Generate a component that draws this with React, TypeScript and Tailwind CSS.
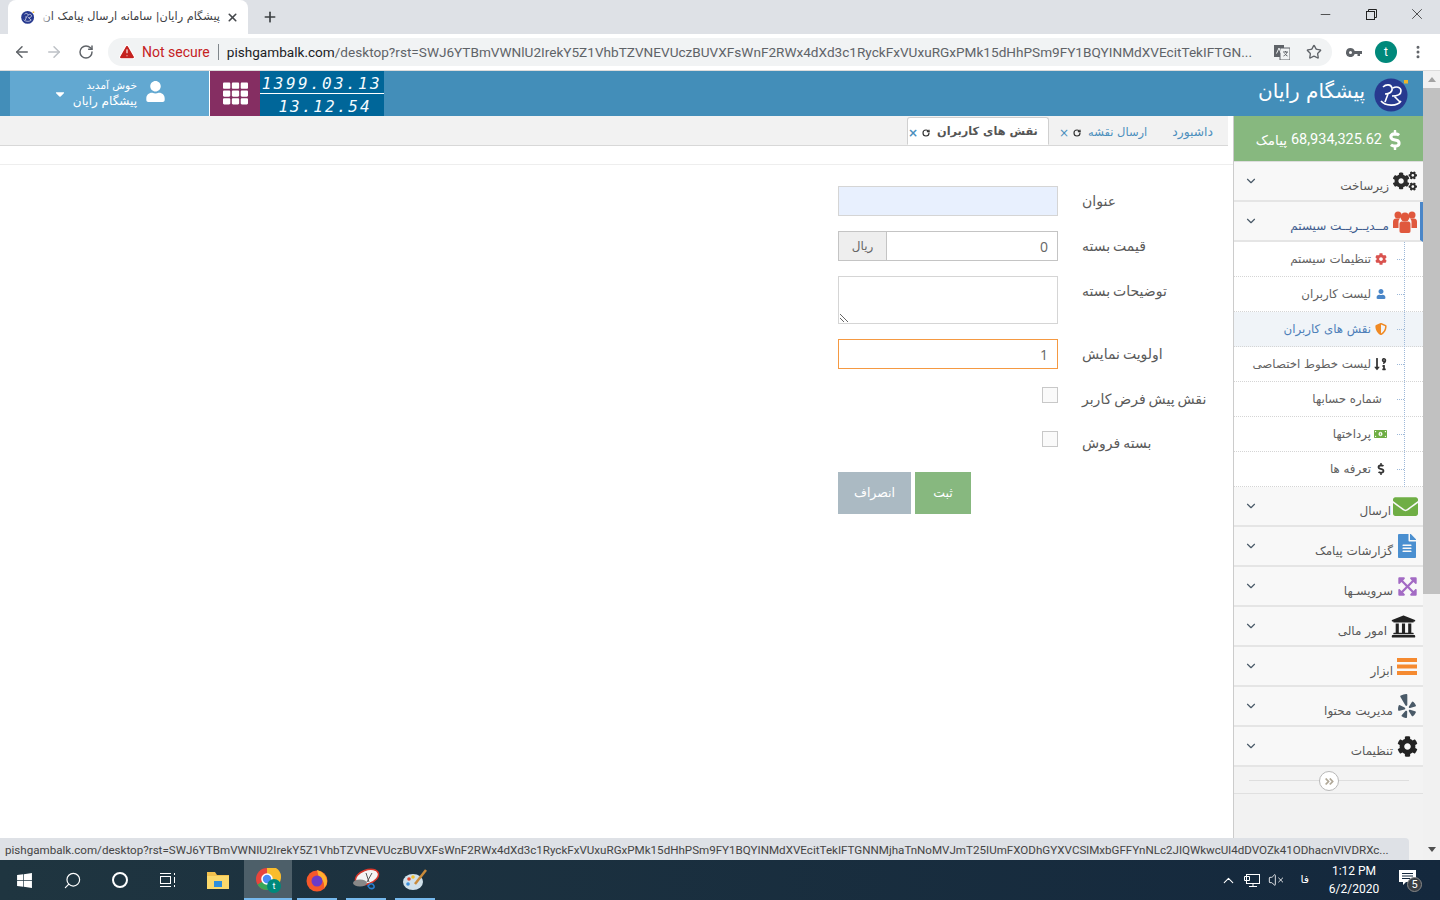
import React from "react";
import {
  FaAngleDoubleRight, FaCaretDown, FaCog, FaCogs, FaDollarSign, FaEnvelope, FaExpandArrowsAlt,
  FaFileAlt, FaMoneyBillAlt, FaShieldAlt, FaSortNumericDownAlt, FaTh, FaUniversity, FaUser, FaWindows, FaYelp,
} from "react-icons/fa";
import { ArrowLeft, ArrowRight, ChevronDown, ChevronUp, Minus, MoreVertical, Plus, RotateCw, Search, Star, TriangleAlert, VolumeX, X } from "lucide-react";

const fa = { fontFamily: '"DejaVu Sans", "Noto Sans", sans-serif' };
const la = { fontFamily: 'Roboto, "Noto Sans", sans-serif' };
const num = { fontFamily: '"Open Sans", "Noto Sans", sans-serif' };
const URL_REST = "/desktop?rst=SWJ6YTBmVWNlU2IrekY5Z1VhbTZVNEVUczBUVXFsWnF2RWx4dXd3c1RyckFxVUxuRGxPMk15dHhPSm9FY1BQYINMdXVEcitTekIFTGN...";
const STATUS = "pishgambalk.com/desktop?rst=SWJ6YTBmVWNIU2IrekY5Z1VhbTZVNEVUczBUVXFsWnF2RWx4dXd3c1RyckFxVUxuRGxPMk15dHhPSm9FY1BQYINMdXVEcitTekIFTGNNMjhaTnNoMVJmT25IUmFXODhGYXVCSlMxbGFFYnNLc2JIQWkwcUl4dDVOZk41ODhacnVIVDRXc...";

function Logo({ size }: { size: number }) {
  return (
    <svg width={size} height={size} viewBox="0 0 36 36" className="shrink-0">
      <circle cx="17" cy="19" r="16.5" fill="#27398f" />
      <path d="M9 11c3-3 8-3 9 1s-3 6-7 6M18 20c4 0 9-1 9-5s-5-5-8-3M14 18l-3 8M20 20l6 6M7 25c4 5 16 6 20 0" stroke="#fff" strokeWidth="1.6" fill="none" />
      <rect x="30" y="4" width="4" height="3.5" fill="#f0b428" />
    </svg>
  );
}

function ChromeBar() {
  return (
    <>
      <div className="h-[34px] shrink-0 bg-[#dee1e6] flex items-end pl-[8px]">
        <div className="w-[240px] h-[34px] bg-white rounded-t-[8px] flex items-center pl-[13px] pr-[9px]">
          <Logo size={14} />
          <div className="relative flex-1 min-w-0 ml-[4px] mr-[6px] h-[20px] flex items-center" dir="rtl" style={fa}>
            <span className="whitespace-nowrap text-[11.3px] text-[#3c4043]">پیشگام رایان| سامانه ارسال پیامک ان</span>
            <span className="absolute left-0 top-0 h-full w-[14px] bg-gradient-to-r from-white to-transparent" />
          </div>
          <X size={13} strokeWidth={3} className="text-[#45484c] shrink-0" />
        </div>
        <div className="w-[44px] h-[34px] flex items-center justify-center"><Plus size={16} strokeWidth={2.5} className="text-[#3c4043]" /></div>
        <div className="flex-1" />
        <div className="h-[34px] flex text-[#222] pb-[6px] items-center">
          <div className="w-[46px] flex justify-center"><Minus size={15} strokeWidth={1.2} /></div>
          <div className="w-[46px] flex justify-center">
            <svg width="11" height="11" viewBox="0 0 11 11" fill="none" stroke="#222"><rect x="0.5" y="2.5" width="8" height="8" /><path d="M2.5 2.5v-2h8v8h-2" /></svg>
          </div>
          <div className="w-[46px] flex justify-center"><X size={18} strokeWidth={1} /></div>
        </div>
      </div>
      <div className="h-[37px] shrink-0 bg-white border-b border-[#dcdcdc] flex items-center" style={la}>
        <ArrowLeft size={18} strokeWidth={2} className="ml-[13px] text-[#5f6368]" />
        <ArrowRight size={18} strokeWidth={2} className="ml-[14px] text-[#bdc1c6]" />
        <RotateCw size={16} strokeWidth={2.2} className="ml-[15px] text-[#5f6368]" />
        <div className="ml-[14px] w-[1224px] h-[28px] rounded-[14px] bg-[#f1f3f4] flex items-center pl-[10px] pr-[8px]">
          <TriangleAlert size={18} fill="#c5221f" stroke="#fff" strokeWidth={1.5} />
          <span className="ml-[6px] text-[14px] text-[#c5221f] whitespace-nowrap">Not secure</span>
          <span className="mx-[8px] h-[16px] w-px bg-[#80868b]" />
          <span className="text-[13.6px] text-[#202124] whitespace-nowrap">pishgambalk.com</span>
          <span className="text-[13.6px] text-[#5f6368] whitespace-nowrap">{URL_REST}</span>
          <div className="flex-1" />
          <svg width="16" height="15" viewBox="0 0 16 15" className="mr-[16px] shrink-0">
            <rect x="0" y="0" width="10" height="12" fill="#5f6368" />
            <rect x="6" y="3" width="10" height="12" fill="#f1f3f4" stroke="#5f6368" />
            <path d="M2.5 8.5L5 3l2 5" stroke="#f1f3f4" fill="none" />
            <path d="M9 7h5M11.5 6v1M13 7c-.5 2-2 3.5-3.5 4M10.5 8.5c.7 1 1.8 2 3 2.5" stroke="#5f6368" fill="none" />
          </svg>
          <Star size={16} strokeWidth={2} className="text-[#5f6368] mr-[2px]" />
        </div>
        <svg width="16" height="9" viewBox="0 0 16 9" className="ml-[14px]" fill="#5f6368">
          <path d="M4.5 0a4.5 4.5 0 0 1 4.2 3H16v3h-2v2h-2.5V6H8.7a4.5 4.5 0 1 1-4.2-6zm0 3a1.5 1.5 0 1 0 0 3 1.5 1.5 0 0 0 0-3z" fillRule="evenodd" />
        </svg>
        <div className="ml-[13px] w-[22px] h-[22px] rounded-full bg-[#00897b] text-white text-[12px] flex items-center justify-center">t</div>
        <MoreVertical size={16} strokeWidth={2.5} className="ml-[13px] text-[#5f6368]" />
      </div>
    </>
  );
}

function AppHeader() {
  return (
    <div className="h-[45px] shrink-0 bg-[#438eb9] flex text-white">
      <div className="w-[10px]" />
      <div className="w-[199px] bg-[#62a8d1] flex items-center pl-[43px]">
        <FaCaretDown size={14} />
        <div className="ml-[6px] w-[64px] text-right whitespace-nowrap" dir="rtl" style={fa}>
          <div className="text-[10.5px] leading-[15px]">خوش آمدید</div>
          <div className="text-[12px] leading-[16px]">پیشگام رایان</div>
        </div>
        <FaUser size={21} className="ml-[8px] mb-[4px]" />
      </div>
      <div className="w-px bg-white" />
      <div className="w-[50px] bg-[#852e62] flex items-center justify-center"><FaTh size={25} /></div>
      <div className="w-[124px] bg-[#006699] flex flex-col items-center italic text-[#f4fbff]" style={{ fontFamily: '"DejaVu Sans Mono", monospace' }}>
        <div className="h-[22.5px] leading-[26px] text-[16px] w-full text-center tracking-[2.4px] border-b border-white whitespace-nowrap">1399.03.13</div>
        <div className="flex-1 leading-[25px] pl-[6px] text-[16px] tracking-[2px] whitespace-nowrap">13.12.54</div>
      </div>
      <div className="flex-1" />
      <div className="flex items-center pr-[13px]" dir="rtl">
        <Logo size={36} />
        <span className="mr-[9px] mb-[5px] text-[20px] whitespace-nowrap" style={fa}>پیشگام رایان</span>
      </div>
    </div>
  );
}

function Users() {
  return (
    <svg width="24" height="24" viewBox="0 0 24 24" fill="#e0583d">
      <circle cx="5" cy="6" r="3.5" /><circle cx="19" cy="6" r="3.5" /><circle cx="12" cy="8" r="4.5" />
      <path d="M0 19v-6c0-2 1-3.5 3-3.5h4c-1 1-1.5 2-1.5 3.5v6zM24 19v-6c0-2-1-3.5-3-3.5h-4c1 1 1.5 2 1.5 3.5v6z" />
      <path d="M6.5 22v-7c0-2 1.5-2.5 3-2.5h5c1.5 0 3 .5 3 2.5v7c0 1-.5 2-2 2h-7c-1.5 0-2-1-2-2z" />
    </svg>
  );
}

function MenuItem({ icon, label, active, textClass }: { icon: React.ReactNode; label: string; active?: boolean; textClass: string }) {
  return (
    <div dir="rtl" className={`h-[40px] bg-[#f8f8f8] border-b-2 border-[#e5e5e5] flex items-center pr-[5px] pl-[10px] ${active ? "border-r-[3px] border-r-[#4a86c8] !pr-[2px]" : ""}`}>
      <span className="w-[26px] h-[28px] flex items-center justify-center shrink-0">{icon}</span>
      <span className={`mt-[9px] text-[12px] whitespace-nowrap ${textClass} ${active ? "text-[#3f5d8f]" : "text-[#585858]"}`} style={fa}>{label}</span>
      <ChevronDown size={14} strokeWidth={2} className="mr-auto mb-[1px] text-[#4a5a68]" />
    </div>
  );
}

function SubItem({ icon, label, active }: { icon?: React.ReactNode; label: string; active?: boolean }) {
  return (
    <div dir="rtl" className={`relative h-[35px] border-b border-dotted border-[#d5d5d5] flex items-center pr-[36px] ${active ? "bg-[#f0f4f8]" : "bg-white"}`}>
      <span className="absolute right-[19px] top-[17px] w-[7px] border-t border-dotted border-[#9db8d8]" />
      {icon ? <span className="w-[13px] flex justify-center shrink-0">{icon}</span> : <span className="w-[2px] shrink-0" />}
      <span className={`mr-[3px] mt-[2px] text-[11.8px] whitespace-nowrap ${active ? "text-[#4e7fb8]" : "text-[#616161]"}`} style={fa}>{label}</span>
    </div>
  );
}

function Sidebar() {
  return (
    <aside className="w-[190px] shrink-0 border-l border-[#cccccc] bg-[#f2f2f2] flex flex-col">
      <div dir="rtl" className="h-[46px] bg-[#87b87f] border-b border-[#dddddd] text-white flex items-center pr-[18px] pt-[3px]">
        <FaDollarSign size={20} />
        <span className="mr-[3px] text-[14.5px] whitespace-nowrap" style={la}>68,934,325.62</span>
        <span className="mr-[4px] text-[13.5px] whitespace-nowrap" style={fa}>پیامک</span>
      </div>
      <MenuItem textClass="mr-[3px]" icon={<FaCogs size={24} className="text-[#2b2b2b]" />} label="زیرساخت" />
      <MenuItem textClass="mr-[3px]" active icon={<Users />} label="مــدیــریــت سیستم" />
      <div className="relative">
        <span className="absolute right-[18px] top-0 bottom-0 border-r border-dotted border-[#9db8d8] z-10" />
        <SubItem icon={<FaCog size={12} className="text-[#d9534f]" />} label="تنظیمات سیستم" />
        <SubItem icon={<FaUser size={10} className="text-[#4a86c8]" />} label="لیست کاربران" />
        <SubItem active icon={<FaShieldAlt size={12} className="text-[#f08a24]" />} label="نقش های کاربران" />
        <SubItem icon={<FaSortNumericDownAlt size={14} className="text-[#333]" />} label="لیست خطوط اختصاصی" />
        <SubItem label="شماره حسابها" />
        <SubItem icon={<FaMoneyBillAlt size={14} className="text-[#6fae45]" />} label="پرداختها" />
        <SubItem icon={<FaDollarSign size={12} className="text-[#333]" />} label="تعرفه ها" />
      </div>
      <MenuItem textClass="mr-[1px]" icon={<FaEnvelope size={25} className="text-[#6fae45]" />} label="ارسال" />
      <MenuItem textClass="-mr-[1px]" icon={<FaFileAlt size={24} className="text-[#4a8fd0] translate-x-[2px]" />} label="گزارشات پیامک" />
      <MenuItem textClass="-mr-[1px]" icon={<FaExpandArrowsAlt size={21} className="text-[#a36bc4] translate-x-[2px]" />} label="سرویسـها" />
      <MenuItem textClass="mr-[5px]" icon={<FaUniversity size={25} className="text-[#222] -translate-x-[2px]" />} label="امور مالی" />
      <MenuItem textClass="-mr-[1px]" icon={
        <svg width="20" height="17" viewBox="0 0 20 17" className="translate-x-[2px]" fill="#f58a30"><rect width="20" height="4" /><rect y="6.5" width="20" height="4" /><rect y="13" width="20" height="4" /></svg>
      } label="ابزار" />
      <MenuItem textClass="-mr-[1px]" icon={<FaYelp size={24} className="text-[#4a5a68] translate-x-[2px]" />} label="مدیریت محتوا" />
      <MenuItem textClass="-mr-[1px]" icon={<FaCog size={21} className="text-[#222] translate-x-[2px]" />} label="تنظیمات" />
      <div className="relative h-[27px] border-b border-[#e0e0e0] bg-[#f3f3f3] flex items-center justify-center">
        <div className="w-[160px] border-t border-[#dedede]" />
        <span className="absolute left-[85px] top-[4px] w-[20px] h-[20px] rounded-full border border-[#b8b8b8] bg-white flex items-center justify-center">
          <FaAngleDoubleRight size={11} className="text-[#b0a898]" />
        </span>
      </div>
    </aside>
  );
}

function Tabs() {
  return (
    <div dir="rtl" className="h-[30px] bg-[#f2f2f2] border-b border-[#d8d8d8] mr-[5px] shrink-0 flex items-end pr-[15px] -mb-px" style={fa}>
      <span className="h-[28px] pt-[3px] flex items-center text-[12.3px] text-[#4c8fbd] pl-[25px]">داشبورد</span>
      <span className="h-[28px] pt-[3px] flex items-center text-[11.5px] text-[#4c8fbd] whitespace-nowrap pl-[10px]">ارسال نقشه<RotateCw size={8} strokeWidth={3.5} className="mr-[7px] text-[#333]" /><span className="mr-[4px] text-[#4c8fbd] text-[12px]">×</span></span>
      <span className="h-[28px] pt-[3px] pr-[10px] w-[142px] bg-white border border-b-white border-[#d0d0d0] rounded-t-[3px] flex items-center justify-center text-[11.3px] font-bold text-[#555] whitespace-nowrap">نقش های کاربران<RotateCw size={8} strokeWidth={3.5} className="mr-[7px] text-[#333]" /><span className="mr-[4px] text-[#4c8fbd] text-[12px]">×</span></span>
    </div>
  );
}

function Label({ children, up }: { children: string; up?: boolean }) {
  return (
    <label className={`w-[147px] h-[30px] shrink-0 flex justify-end ${up ? "-mt-[3px]" : ""}`} style={fa}>
      <span className="pl-[24px] leading-[30px] text-[14px] [word-spacing:-1.5px] text-[#5a5a5a] whitespace-nowrap">{children}</span>
    </label>
  );
}

function Form() {
  return (
    <div dir="rtl" className="flex flex-col pr-[28px] pt-[21px]">
      <div className="flex mb-[15px]"><Label>عنوان</Label><div className="w-[220px] h-[30px] border border-[#d5d5d5] bg-[#e8f0fe]" /></div>
      <div className="flex mb-[15px]">
        <Label>قیمت بسته</Label>
        <div className="w-[220px] h-[30px] flex border border-[#c4c4c4]" style={num}>
          <div className="flex-1 bg-white flex items-center px-[9px] text-[14px] text-[#666]">0</div>
          <div className="w-[48px] bg-[#eeeeee] border-r border-[#c4c4c4] flex items-center justify-center text-[12px] text-[#666]" style={fa}>ریال</div>
        </div>
      </div>
      <div className="flex mb-[15px]">
        <Label>توضیحات بسته</Label>
        <div className="relative w-[220px] h-[48px] border border-[#d5d5d5] bg-white">
          <svg className="absolute left-[1px] bottom-[1px]" width="9" height="9" viewBox="0 0 9 9" stroke="#666" fill="none"><path d="M0 1l8 8M0 5l4 4" /></svg>
        </div>
      </div>
      <div className="flex mb-[18px]" style={num}><Label>اولویت نمایش</Label><div className="w-[220px] h-[30px] border border-[#f59942] bg-white text-[14px] text-[#666] flex items-center px-[9px]">1</div></div>
      <div className="flex h-[30px] mb-[14px]"><Label up>نقش پیش فرض کاربر</Label><span className="w-[16px] h-[16px] border border-[#c8c8c8] bg-[#fafafa] block" /></div>
      <div className="flex h-[30px] mb-[11px]"><Label up>بسته فروش</Label><span className="w-[16px] h-[16px] border border-[#c8c8c8] bg-[#fafafa] block" /></div>
      <div className="flex mr-[147px] w-[220px] gap-[4px]" style={fa} dir="ltr">
        <button className="w-[73px] h-[42px] bg-[#abbac3] text-white text-[12.5px]">انصراف</button>
        <button className="w-[56px] h-[42px] bg-[#87b87f] text-white text-[12.5px]">ثبت</button>
      </div>
    </div>
  );
}

function Taskbar() {
  const cell = "h-[40px] flex items-center justify-center relative";
  const under = "absolute bottom-0 h-[2px] bg-[#76b9ed]";
  return (
    <div className="h-[40px] shrink-0 bg-gradient-to-r from-[#1f3540] to-[#14283d] flex text-white" style={la}>
      <div className={`${cell} w-[48px]`}><FaWindows size={17} /></div>
      <div className={`${cell} w-[48px]`}><Search size={19} strokeWidth={1.5} className="-scale-x-100" /></div>
      <div className={`${cell} w-[48px]`}><span className="w-[16px] h-[16px] rounded-full border-2 border-white" /></div>
      <div className={`${cell} w-[48px]`}>
        <svg width="18" height="16" viewBox="0 0 18 16" fill="none" stroke="#fff"><rect x="1.5" y="4.5" width="10" height="7" /><path d="M1 1.5h11M1 14.5h11M15.5 1v2M15.5 5v6M15.5 13v2" /></svg>
      </div>
      <div className={`${cell} w-[52px]`}>
        <svg width="22" height="18" viewBox="0 0 22 18"><path d="M0 1h8l2 3h12v14H0z" fill="#f2c14e" /><path d="M0 5h22v13H0z" fill="#fbd96b" /><rect x="7" y="10" width="8" height="6" fill="#2f8fdc" /></svg>
      </div>
      <div className={`${cell} w-[48px] bg-[#4d5f69]`}>
        <svg width="26" height="26" viewBox="0 0 26 26">
          <circle cx="12" cy="12" r="11" fill="#e8453c" />
          <path d="M12 12L2.5 17.5A11 11 0 0 0 19 20.5z" fill="#3aa757" />
          <path d="M12 1h9a11 11 0 0 1-2 19.5L12 12z" fill="#f9bc2c" />
          <circle cx="12" cy="12" r="5" fill="#4a8cf5" stroke="#fff" strokeWidth="1.6" />
          <circle cx="19" cy="19" r="7" fill="#00897b" />
          <text x="19" y="22" fontSize="9" textAnchor="middle" fill="#fff">t</text>
        </svg>
        <span className={`${under} left-0 right-0`} />
      </div>
      <div className={`${cell} w-[49px]`}>
        <svg width="24" height="24" viewBox="0 0 24 24"><circle cx="12" cy="13" r="10.5" fill="#f5582a" /><path d="M12 2c6 2 10 6 10 11 0 3-1 5-3 7 1-6-2-9-5-10z" fill="#ffb02e" /><circle cx="12" cy="13" r="5.5" fill="#6a3bc8" /></svg>
        <span className={`${under} left-[5px] right-[4px]`} />
      </div>
      <div className={`${cell} w-[49px]`}>
        <svg width="28" height="24" viewBox="0 0 28 24"><ellipse cx="15" cy="9" rx="12" ry="7" fill="#f4f4f4" transform="rotate(-20 15 9)" stroke="#d8362a" strokeWidth="1.5" /><path d="M14 5l3 9M20 5l-5 9" stroke="#555" /><ellipse cx="8" cy="15" rx="7" ry="3.5" fill="#888" /><path d="M16 18c2-3 5-3 6 0s-4 4-6 0z" fill="none" stroke="#2a7fd0" strokeWidth="1.6" /></svg>
        <span className={`${under} left-[5px] right-[4px]`} />
      </div>
      <div className={`${cell} w-[49px]`}>
        <svg width="26" height="24" viewBox="0 0 26 24"><ellipse cx="11" cy="14" rx="10" ry="8" fill="#cfe0ea" /><circle cx="7" cy="11" r="1.8" fill="#e2452f" /><circle cx="11" cy="9" r="1.8" fill="#f3c12d" /><circle cx="6" cy="16" r="1.8" fill="#3a8fdc" /><path d="M13 16L24 2" stroke="#c98a3a" strokeWidth="2.5" /></svg>
        <span className={`${under} left-[5px] right-[4px]`} />
      </div>
      <div className="flex-1" />
      <div className="flex items-center pr-[17px]">
        <ChevronUp size={17} strokeWidth={1.5} />
        <svg className="ml-[7px]" width="16" height="15" viewBox="0 0 16 15" fill="none" stroke="#fff"><rect x="2.5" y="1.5" width="13" height="9" /><path d="M9 11v2M5 13.5h8M0.5 3.5h5v4h-5z" /></svg>
        <VolumeX size={16} strokeWidth={1.3} className="ml-[8px]" />
        <span className="ml-[16px] text-[11px]" style={fa}>فا</span>
        <div className="ml-[10px] w-[70px] text-center text-[12px] leading-[18px]">
          <div>1:12 PM</div>
          <div>6/2/2020</div>
        </div>
        <div className="relative ml-[10px] w-[24px] h-[24px]">
          <svg width="17" height="16" viewBox="0 0 17 16" className="absolute left-0 top-[2px]"><path d="M0 0h17v12H7l-3 3v-3H0z" fill="#fff" /><path d="M3 3.5h11M3 6h11M3 8.5h8" stroke="#14283d" /></svg>
          <span className="absolute left-[8px] top-[9px] w-[15px] h-[15px] rounded-full bg-[#3a3f45] border border-[#888] text-[11px] leading-[13px] text-center">5</span>
        </div>
      </div>
    </div>
  );
}

export default function App() {
  return (
    <div className="relative w-[1440px] h-[900px] overflow-hidden flex flex-col bg-white">
      <ChromeBar />
      <div className="flex-1 min-h-0 flex">
        <div className="flex-1 min-w-0 flex flex-col">
          <AppHeader />
          <div className="flex-1 min-h-0 flex">
            <main className="flex-1 min-w-0 flex flex-col">
              <Tabs />
              <div className="h-[20px] border-b border-[#eeeeee] shrink-0" />
              <Form />
            </main>
            <Sidebar />
          </div>
        </div>
        <div className="w-[17px] shrink-0 bg-[#f1f1f1] flex flex-col">
          <div className="h-[17px] flex items-center justify-center"><span className="border-x-[4px] border-x-transparent border-b-[5px] border-b-[#a3a3a3]" /></div>
          <div className="h-[506px] bg-[#c1c1c1]" />
          <div className="flex-1" />
          <div className="h-[17px] flex items-center justify-center mb-[2px]"><span className="border-x-[4px] border-x-transparent border-t-[5px] border-t-[#505050]" /></div>
        </div>
      </div>
      <Taskbar />
      <div className="absolute left-0 top-[838px] w-[1409px] h-[22px] bg-[#dee1e6] rounded-tr-[4px] pl-[5px] pr-[5px] text-[11.6px] leading-[24px] text-[#444] whitespace-nowrap" style={la}>{STATUS}</div>
    </div>
  );
}
